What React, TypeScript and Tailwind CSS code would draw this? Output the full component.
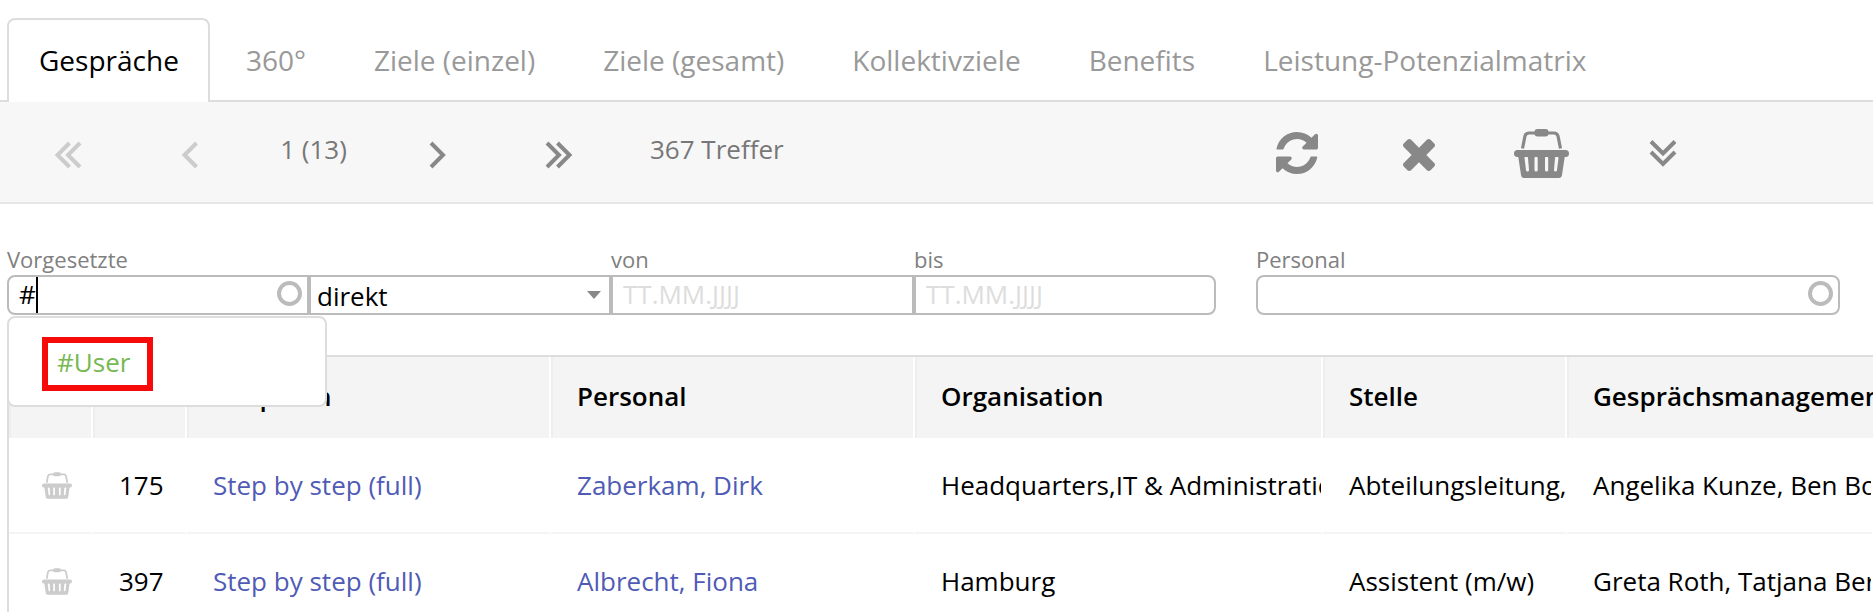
import type { ReactNode } from "react";

const tabs = [
  "Gespräche",
  "360°",
  "Ziele (einzel)",
  "Ziele (gesamt)",
  "Kollektivziele",
  "Benefits",
  "Leistung-Potenzialmatrix",
];

const columns = ["", "", "Gespräch", "Personal", "Organisation", "Stelle", "Gesprächsmanagement"];

const rows = [
  {
    id: "175",
    process: "Step by step (full)",
    person: "Zaberkam, Dirk",
    organisation: "Headquarters,IT & Administration",
    position: "Abteilungsleitung,",
    management: "Angelika Kunze, Ben Bockmann",
  },
  {
    id: "397",
    process: "Step by step (full)",
    person: "Albrecht, Fiona",
    organisation: "Hamburg",
    position: "Assistent (m/w)",
    management: "Greta Roth, Tatjana Berger",
  },
];

const Basket = ({ className }: { className: string }) => (
  <svg viewBox="0 0 55 49" className={className} fill="currentColor" aria-hidden="true">
    <path
      d="M8.5 19.500 11 7Q12 4 15 4H40Q43 4 44 7L46.500 19.500"
      fill="none"
      stroke="currentColor"
      strokeWidth="3.200"
    />
    <rect x="20.500" y="0" width="14" height="7.500" rx="3" />
    <rect x="0" y="21" width="55" height="7" rx="3.500" />
    <path
      fillRule="evenodd"
      d="M4 26H51L48 46Q47.500 49 45 49H10Q7.500 49 7 46ZM10.500 29 12 41a1.500 1.500 0 0 0 3 0L14 29a1.750 1.750 0 0 0-3.500 0ZM20.500 29V41a1.600 1.600 0 0 0 3.200 0V29a1.600 1.600 0 0 0-3.200 0ZM31 29V41a1.600 1.600 0 0 0 3.200 0V29a1.600 1.600 0 0 0-3.200 0ZM41 29 40 41a1.500 1.500 0 0 0 3 0L44.500 29a1.750 1.750 0 0 0-3.500 0Z"
    />
  </svg>
);

const Chevrons = ({ paths }: { paths: string[] }) => (
  <svg
    viewBox="0 0 28 28"
    className="h-7 w-7"
    fill="none"
    stroke="currentColor"
    strokeWidth="4"
    aria-hidden="true"
  >
    {paths.map((d) => (
      <path key={d} d={d} />
    ))}
  </svg>
);

const ToolButton = ({
  label,
  disabled,
  lowered,
  children,
}: {
  label: string;
  disabled?: boolean;
  lowered?: boolean;
  children: ReactNode;
}) => (
  <button
    type="button"
    aria-label={label}
    disabled={disabled}
    className={`flex h-16 w-[122px] shrink-0 items-center justify-center text-[#888] disabled:text-[#ccc] ${lowered ? "pt-1" : ""}`}
  >
    {children}
  </button>
);

const Ring = () => (
  <span className="pointer-events-none absolute right-[7px] top-1.5 h-[25px] w-[25px] rounded-full border-4 border-[#bbb]" />
);

const Tabs = () => (
  <nav className="flex h-[102px] items-end border-b-2 border-[#ddd] pl-[7px] text-[28px]">
    {tabs.map((tab, index) => (
      <a
        key={tab}
        href="#"
        className={
          index === 0
            ? "-mb-[2px] mr-[2px] flex h-[84px] items-center rounded-t-lg border-2 border-b-0 border-[#ddd] bg-white pb-[2px] pl-[30px] pr-[29px] text-black"
            : "flex h-20 items-center whitespace-nowrap px-[34px] text-[#999]"
        }
      >
        {tab}
      </a>
    ))}
  </nav>
);

const Toolbar = () => (
  <div className="flex h-[102px] items-center border-b-2 border-[#e6e6e6] bg-[#f7f7f7] pl-[7px] pt-[2px] text-[26px] text-[#777]">
    <ToolButton label="Erste Seite" disabled lowered>
      <Chevrons paths={["M15.500 2 3.500 14 15.500 26", "M26 2 14 14 26 26"]} />
    </ToolButton>
    <ToolButton label="Vorherige Seite" disabled lowered>
      <Chevrons paths={["M20.500 2 8.500 14 20.500 26"]} />
    </ToolButton>
    <span className="w-[125px] pb-2 text-center">1 (13)</span>
    <ToolButton label="Nächste Seite" lowered>
      <Chevrons paths={["M8 2 20 14 8 26"]} />
    </ToolButton>
    <ToolButton label="Letzte Seite" lowered>
      <Chevrons paths={["M2 2 14 14 2 26", "M12.500 2 24.500 14 12.500 26"]} />
    </ToolButton>
    <span className="w-[616px] pb-2 pl-[30px]">367 Treffer</span>
    <ToolButton label="Aktualisieren">
      <svg viewBox="0 0 1536 1536" className="h-[42px] w-[42px]" fill="currentColor" aria-hidden="true">
        <path d="M1511 928q0 5-1 7-64 268-268 434.500T764 1536q-146 0-282.500-55T238 1324l-129 129q-19 19-45 19t-45-19-19-45V960q0-26 19-45t45-19h448q26 0 45 19t19 45-19 45l-137 137q71 66 161 102t187 36q134 0 250-65t186-179q11-17 53-117 8-23 30-23h192q13 0 22.500 9.500t9.500 22.500zm25-800v448q0 26-19 45t-45 19h-448q-26 0-45-19t-19-45 19-45l138-138Q969 256 768 256q-134 0-250 65T332 500q-11 17-53 117-8 23-30 23H50q-13 0-22.500-9.500T18 608v-7q65-268 270-434.500T768 0q146 0 284 55.500T1297 212l130-129q19-19 45-19t45 19 19 45z" />
      </svg>
    </ToolButton>
    <ToolButton label="Leeren" lowered>
      <svg viewBox="110 366 1188 1188" className="h-8 w-8" fill="currentColor" aria-hidden="true">
        <path d="M1298 1322q0 40-28 68l-136 136q-28 28-68 28t-68-28l-294-294-294 294q-28 28-68 28t-68-28l-136-136q-28-28-28-68t28-68l294-294-294-294q-28-28-28-68t28-68l136-136q28-28 68-28t68 28l294 294 294-294q28-28 68-28t68 28l136 136q28 28 28 68t-28 68l-294 294 294 294q28 28 28 68z" />
      </svg>
    </ToolButton>
    <ToolButton label="Warenkorb">
      <Basket className="h-[49px] w-[55px]" />
    </ToolButton>
    <ToolButton label="Mehr anzeigen">
      <Chevrons paths={["M2 2.500 14 14.500 26 2.500", "M2 13 14 25 26 13"]} />
    </ToolButton>
  </div>
);

const inputStyle =
  "block h-10 w-full border-2 border-[#bbb] bg-white text-[26px] text-black outline-none placeholder:text-[#ddd] placeholder:opacity-100";

const labelStyle = "mb-[2px] block leading-7";

const Filters = () => (
  <form className="flex items-end pl-[7px] pt-[41px] text-[22px] text-[#808080]">
    <div className="relative w-[302px] shrink-0">
      <label htmlFor="supervisor" className={labelStyle}>Vorgesetzte</label>
      <div className="relative">
        <input id="supervisor" defaultValue="#" className={`${inputStyle} rounded-l-lg pb-[2px] pl-[10px]`} />
        <span className="pointer-events-none absolute left-[29px] top-[2px] h-9 w-[2px] bg-black" />
        <Ring />
      </div>
      <div className="absolute left-0 top-[71px] z-10 w-[320px] rounded-lg border-2 border-[#ddd] bg-white pb-[14px] pl-[33px] pt-[19px]">
        <button
          type="button"
          className="flex h-[54px] w-[111px] items-center border-6 border-[#f70a0a] pb-1 pl-[9px] text-[26px] text-[#76b852]"
        >
          #User
        </button>
      </div>
    </div>
    <div className="relative w-[302px] shrink-0">
      <select aria-label="Ebene" className={`${inputStyle} appearance-none px-1.5 pb-1`}>
        <option>direkt</option>
      </select>
      <svg
        viewBox="0 0 14 8"
        className="pointer-events-none absolute right-2.5 top-4 h-2 w-[14px]"
        fill="#888"
        aria-hidden="true"
      >
        <path d="M0 0H14L7 8Z" />
      </svg>
    </div>
    <div className="w-[303px] shrink-0">
      <label htmlFor="from" className={labelStyle}>von</label>
      <input id="from" placeholder="TT.MM.JJJJ" className={`${inputStyle} px-[10px] pb-[2px]`} />
    </div>
    <div className="w-[302px] shrink-0">
      <label htmlFor="to" className={labelStyle}>bis</label>
      <input id="to" placeholder="TT.MM.JJJJ" className={`${inputStyle} rounded-r-lg px-[10px] pb-[2px]`} />
    </div>
    <div className="ml-10 w-[584px]">
      <label htmlFor="person" className={labelStyle}>Personal</label>
      <div className="relative">
        <input id="person" className={`${inputStyle} rounded-lg px-[10px] pb-[2px]`} />
        <Ring />
      </div>
    </div>
  </form>
);

const Results = () => (
  <div className="ml-[7px] mt-10 overflow-hidden border-l-2 border-t-2 border-[#ddd]">
    <table className="w-full table-fixed border-separate border-spacing-0 text-left text-[26px]">
      <colgroup>
        <col className="w-[84px]" />
        <col className="w-[94px]" />
        <col className="w-[364px]" />
        <col className="w-[364px]" />
        <col className="w-[408px]" />
        <col className="w-[244px]" />
        <col />
      </colgroup>
      <thead>
        <tr className="h-[81px] bg-[#f4f4f4]">
          {columns.map((column, index) => (
            <th
              key={index}
              className="overflow-hidden whitespace-nowrap border-l-2 border-r-2 border-l-[#eee] border-r-white p-0 pb-[2px] pl-6 font-semibold last:border-r-0"
            >
              {column}
            </th>
          ))}
        </tr>
      </thead>
      <tbody className="[&_td]:overflow-hidden [&_td]:whitespace-nowrap [&_td]:border-b-2 [&_td]:border-r-2 [&_td]:border-b-[#f4f4f4] [&_td]:border-r-white [&_td]:p-0 [&_td]:pl-[26px]">
        {rows.map((row) => (
          <tr key={row.id} className="h-24">
            <td>
              <button type="button" aria-label="In den Warenkorb" className="ml-[7px] block text-[#ccc]">
                <Basket className="h-[27px] w-[30px]" />
              </button>
            </td>
            <td>{row.id}</td>
            <td>
              <a href="#" className="text-[#4f5bb5]">{row.process}</a>
            </td>
            <td>
              <a href="#" className="text-[#4f5bb5]">{row.person}</a>
            </td>
            <td>{row.organisation}</td>
            <td>{row.position}</td>
            <td>{row.management}</td>
          </tr>
        ))}
      </tbody>
    </table>
  </div>
);

const App = () => {
  return (
    <main className="overflow-hidden bg-white font-['Open_Sans','Noto_Sans',sans-serif] text-black">
      <Tabs />
      <Toolbar />
      <Filters />
      <Results />
    </main>
  );
};

export default App;
